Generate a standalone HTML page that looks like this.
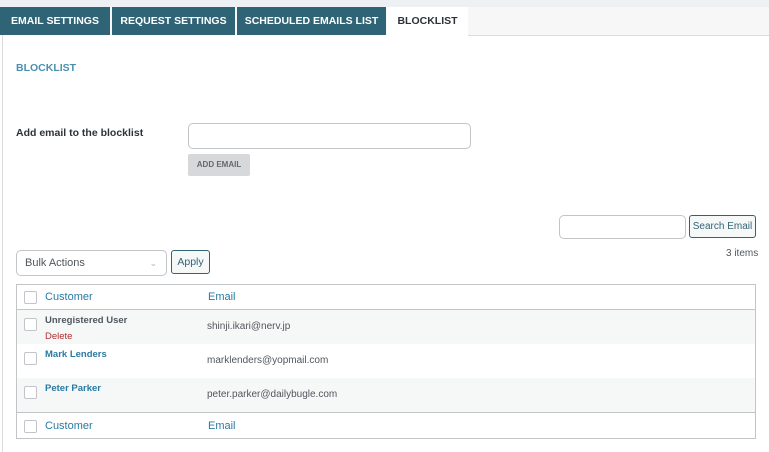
<!DOCTYPE html>
<html><head><style>
*{box-sizing:border-box;margin:0;padding:0}
body{width:769px;height:452px;background:#fff;font-family:"Liberation Sans",sans-serif;position:relative;overflow:hidden;color:#3c434a}
.a{position:absolute}
.tab{position:absolute;top:7px;height:28px;background:#2f6477;color:#fff;font-size:10.5px;font-weight:bold;line-height:28px;text-align:center}
.cb{position:absolute;width:13px;height:13px;border:1px solid #c3c4c7;border-radius:2px;background:#fff}
.lnk{color:#2a7aa3}
</style></head><body>
<div class="a" style="left:0;top:0;width:769px;height:7px;background:#eef1f4"></div>
<div class="a" style="left:0;top:7px;width:769px;height:28px;background:#f7f7f7"></div>
<div class="tab" style="left:0;width:110px">EMAIL SETTINGS</div>
<div class="tab" style="left:112px;width:123px">REQUEST SETTINGS</div>
<div class="tab" style="left:237px;width:149px">SCHEDULED EMAILS LIST</div>
<div class="tab" style="left:387px;width:81px;background:#fff;color:#2c3338">BLOCKLIST</div>
<div class="a" style="left:468px;top:35px;width:301px;height:1px;background:#dcdcde"></div>
<div class="a" style="left:2px;top:35px;width:1px;height:417px;background:#dcdcde"></div>
<div class="a lnk" style="left:16px;top:62px;font-size:10.5px;font-weight:bold;color:#4a8fb0">BLOCKLIST</div>
<div class="a" style="left:16px;top:127px;font-size:10.5px;font-weight:bold;color:#2c3338">Add email to the blocklist</div>
<div class="a" style="left:188px;top:123px;width:283px;height:26px;border:1px solid #c3c4c7;border-radius:5px"></div>
<div class="a" style="left:188px;top:154px;width:62px;height:22px;background:#d7d8d9;border-radius:2px;font-size:8px;font-weight:bold;color:#646970;text-align:center;line-height:22px">ADD EMAIL</div>
<div class="a" style="left:559px;top:215px;width:127px;height:24px;border:1px solid #c3c4c7;border-radius:5px"></div>
<div class="a" style="left:689px;top:215px;width:67px;height:23px;border:1px solid #2f6477;border-radius:3px;background:#f6f7f7;font-size:10px;color:#2f6477;text-align:center;line-height:21px">Search Email</div>
<div class="a" style="left:726px;top:248px;font-size:10px;color:#50575e">3 items</div>
<div class="a" style="left:16px;top:250px;width:151px;height:26px;border:1px solid #c3c4c7;border-radius:5px;font-size:11px;line-height:24px;padding-left:8px;color:#50575e">Bulk Actions<span style="position:absolute;right:9px;top:0;color:#b0b4b8;font-size:9px">&#8964;</span></div>
<div class="a" style="left:171px;top:250px;width:39px;height:24px;border:1px solid #2f6477;border-radius:3px;background:#f6f7f7;font-size:10.5px;color:#2f6477;text-align:center;line-height:22px">Apply</div>
<div class="a" style="left:16px;top:284px;width:740px;height:155px;border:1px solid #c3c4c7"></div>
<div class="a" style="left:17px;top:309px;width:738px;height:1px;background:#c3c4c7"></div>
<div class="a" style="left:17px;top:310px;width:738px;height:34px;background:#f6f7f7"></div>
<div class="a" style="left:17px;top:378px;width:738px;height:34px;background:#f6f7f7"></div>
<div class="a" style="left:17px;top:412px;width:738px;height:1px;background:#c3c4c7"></div>
<div class="cb" style="left:24px;top:291px"></div>
<div class="a lnk" style="left:45px;top:291px;font-size:11px">Customer</div>
<div class="a lnk" style="left:208px;top:291px;font-size:11px">Email</div>
<div class="cb" style="left:24px;top:318px"></div>
<div class="a" style="left:45px;top:315px;font-size:9.5px;font-weight:bold;color:#50575e">Unregistered User</div>
<div class="a" style="left:45px;top:331px;font-size:9.5px;color:#b32d2e">Delete</div>
<div class="a" style="left:207px;top:321px;font-size:10px;color:#50575e">shinji.ikari@nerv.jp</div>
<div class="cb" style="left:24px;top:352px"></div>
<div class="a lnk" style="left:45px;top:349px;font-size:9.5px;font-weight:bold">Mark Lenders</div>
<div class="a" style="left:207px;top:355px;font-size:10px;color:#50575e">marklenders@yopmail.com</div>
<div class="cb" style="left:24px;top:386px"></div>
<div class="a lnk" style="left:45px;top:383px;font-size:9.5px;font-weight:bold">Peter Parker</div>
<div class="a" style="left:207px;top:389px;font-size:10px;color:#50575e">peter.parker@dailybugle.com</div>
<div class="cb" style="left:24px;top:420px"></div>
<div class="a lnk" style="left:45px;top:420px;font-size:11px">Customer</div>
<div class="a lnk" style="left:208px;top:420px;font-size:11px">Email</div>
</body></html>
